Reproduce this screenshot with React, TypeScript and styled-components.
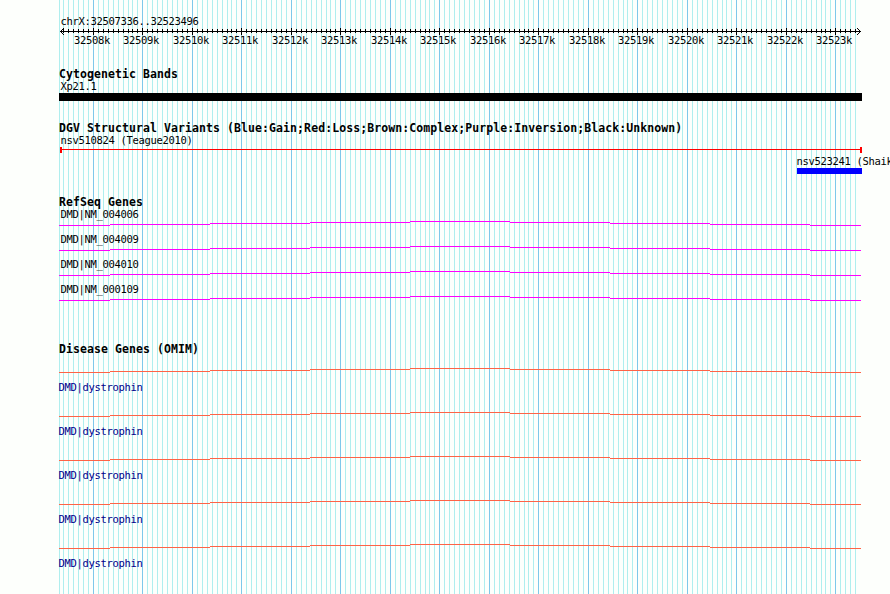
import React from 'react';
import styled, { createGlobalStyle } from 'styled-components';

const GlobalStyle = createGlobalStyle`
    body {
        margin: 0;
        background: #fdfffc;
        overflow: hidden;
    }
`;

const REGION = { chromosome: 'chrX', start: 32507336, end: 32523496 };
const VIEW_WIDTH = 890;
const VIEW_HEIGHT = 594;
const LEFT = 60;
const PX_PER_BASE = 800 / (REGION.end - REGION.start + 1);
const LABEL_WIDTH = 36;

const toX = (position: number) => Math.round(LEFT + (position - REGION.start) * PX_PER_BASE);

interface ITick {
    position: number;
    x: number;
    major: boolean;
}

const getTicks = (): ITick[] => {
    let ticks: ITick[] = [];
    for (let position = Math.ceil(REGION.start / 100) * 100; position <= REGION.end; position += 100) {
        ticks.push({ position, x: toX(position), major: position % 1000 === 0 });
    }
    return ticks;
}

const ticks = getTicks();
const majorTicks = ticks.filter(t => t.major);

const refSeqGenes = ['DMD|NM_004006', 'DMD|NM_004009', 'DMD|NM_004010', 'DMD|NM_000109'];
const omimGenes = ['DMD|dystrophin', 'DMD|dystrophin', 'DMD|dystrophin', 'DMD|dystrophin', 'DMD|dystrophin'];

const Browser = styled.main`
    display: grid;
    width: ${VIEW_WIDTH}px;
    height: ${VIEW_HEIGHT}px;
    overflow: hidden;
    font-family: "DejaVu Sans Mono", "Liberation Mono", monospace;
    color: #000;
`;

const Drawing = styled.svg`
    display: block;
    shape-rendering: crispEdges;
`;

const Gridlines = styled(Drawing)`
    grid-area: 1 / 1;
`;

const Tracks = styled.div`
    grid-area: 1 / 1;
    min-width: 0;
    padding-top: 15px;
`;

const Text = styled.div<{ $indent?: number; $color?: string }>`
    height: 13px;
    padding-left: ${p => p.$indent ?? 60.4}px;
    color: ${p => p.$color ?? '#000'};
    font-size: 10.5px;
    letter-spacing: -0.32px;
    line-height: 13px;
    white-space: pre;
`;

const Title = styled.h2`
    height: 12px;
    margin: 0;
    padding-left: 59px;
    font-size: 11.5px;
    font-weight: bold;
    letter-spacing: 0.08px;
    line-height: 13px;
    white-space: pre;
`;

const Track = styled.section<{ $height: number }>`
    height: ${p => p.$height}px;
`;

const ScaleLabels = styled.div`
    display: flex;
    height: 13px;
    margin-top: -1px;
    padding-left: ${majorTicks[0].x - LABEL_WIDTH / 2 - 1}px;
`;

const ScaleLabel = styled(Text)<{ $gap: number }>`
    flex: none;
    width: ${LABEL_WIDTH}px;
    margin-right: ${p => p.$gap}px;
    padding-left: 0;
`;

const Band = styled.div`
    width: 803px;
    height: 8px;
    margin: 0 0 0 59px;
    background: #000;
`;

const Variant = styled.div<{ $gapAbove?: number }>`
    padding-top: ${p => p.$gapAbove ?? 0}px;
`;

const Gain = styled.div`
    width: 65px;
    height: 6px;
    margin-left: 797px;
    background: #00f;
`;

const GeneRow = styled.div<{ $height: number }>`
    height: ${p => p.$height}px;
`;

const DiseaseGenes = styled.div`
    padding-top: 13px;
`;

const DiseaseGene = styled.div`
    display: flex;
    flex-direction: column;
    gap: 8px;
    height: 44px;
`;

const Grid = () => (
    <Gridlines width={VIEW_WIDTH} height={VIEW_HEIGHT}>
        <rect x={59} y={0} width={1} height={VIEW_HEIGHT} fill="#afeeee" />
        {ticks.map(t => (
            <rect key={t.position} x={t.x} y={0} width={1} height={VIEW_HEIGHT} fill={t.major ? '#7ec8ea' : '#afeeee'} />
        ))}
    </Gridlines>
);

const Ruler = () => (
    <Drawing width={VIEW_WIDTH} height={7}>
        <rect x={60} y={3} width={801} height={1} />
        {ticks.map(t => (
            <rect key={t.position} x={t.x} y={t.major ? 0 : 1} width={1} height={t.major ? 7 : 4} />
        ))}
        {[1, 2, 3].map(i => (
            <React.Fragment key={i}>
                <rect x={60 + i} y={3 - i} width={1} height={1} />
                <rect x={60 + i} y={3 + i} width={1} height={1} />
                <rect x={860 - i} y={3 - i} width={1} height={1} />
                <rect x={860 - i} y={3 + i} width={1} height={1} />
            </React.Fragment>
        ))}
    </Drawing>
);

const Loss = () => (
    <Drawing width={VIEW_WIDTH} height={6} fill="#f00">
        <rect x={60} y={2} width={801} height={1} />
        <rect x={60} y={0} width={2} height={6} />
        <rect x={860} y={0} width={2} height={6} />
    </Drawing>
);

// An intron spanning the whole view, stepped up to its middle
const Intron = ({ color }: { color: string }) => (
    <Drawing width={VIEW_WIDTH} height={5} fill={color}>
        {[4, 3, 2, 1, 0, 1, 2, 3, 4].map((y, i) => {
            let from = i === 0 ? 59 : 10 + i * 100;
            let to = i === 8 ? 861 : 110 + i * 100;
            return <rect key={i} x={from} y={y} width={to - from} height={1} />;
        })}
    </Drawing>
);

export default function App() {
    return (
        <>
            <GlobalStyle />
            <Browser>
                <Grid />
                <Tracks>
                    <Track $height={53}>
                        <Text>{REGION.chromosome}:{REGION.start}..{REGION.end}</Text>
                        <Ruler />
                        <ScaleLabels>
                            {majorTicks.map((t, i) => (
                                <ScaleLabel
                                    key={t.position}
                                    $gap={i + 1 < majorTicks.length ? majorTicks[i + 1].x - t.x - LABEL_WIDTH : 0}
                                >
                                    {t.position / 1000}k
                                </ScaleLabel>
                            ))}
                        </ScaleLabels>
                    </Track>
                    <Track $height={54}>
                        <Title>Cytogenetic Bands</Title>
                        <Text>Xp21.1</Text>
                        <Band />
                    </Track>
                    <Track $height={74}>
                        <Title>DGV Structural Variants (Blue:Gain;Red:Loss;Brown:Complex;Purple:Inversion;Black:Unknown)</Title>
                        <Variant>
                            <Text>nsv510824 (Teague2010)</Text>
                            <Loss />
                        </Variant>
                        <Variant $gapAbove={2}>
                            <Text $indent={796.4}>nsv523241 (Shaik</Text>
                            <Gain />
                        </Variant>
                    </Track>
                    <Track $height={147}>
                        <Title>RefSeq Genes</Title>
                        {refSeqGenes.map(name => (
                            <GeneRow key={name} $height={25}>
                                <Text>{name}</Text>
                                <Intron color="#f0f" />
                            </GeneRow>
                        ))}
                    </Track>
                    <Title>Disease Genes (OMIM)</Title>
                    <DiseaseGenes>
                        {omimGenes.map((name, i) => (
                            <DiseaseGene key={i}>
                                <Intron color="#ff6347" />
                                <Text $indent={58.4} $color="#00008b">{name}</Text>
                            </DiseaseGene>
                        ))}
                    </DiseaseGenes>
                </Tracks>
            </Browser>
        </>
    );
}
